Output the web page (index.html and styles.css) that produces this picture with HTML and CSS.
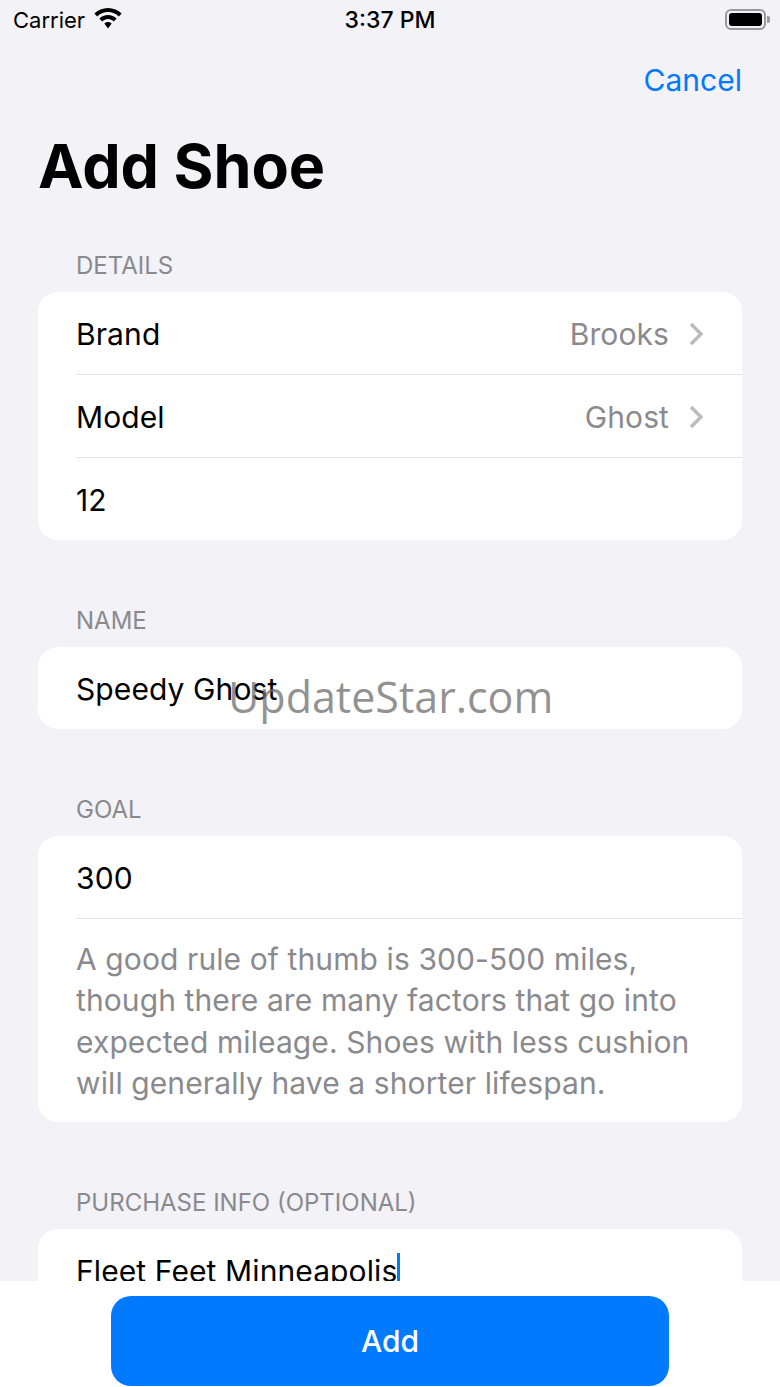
FILE: index.html
```html
<!DOCTYPE html>
<html lang="en">
<head>
    <meta charset="UTF-8">
    <meta name="viewport" content="width=device-width, initial-scale=1.0">
    <title>Add Shoe</title>
    <link rel="stylesheet" href="styles.css">
</head>
<body>
    <div class="screen">
        <div class="scroll">
            <div class="status-bar">
                <div class="status-left">
                    <span>Carrier</span>
                    <svg class="wifi" width="28" height="21" viewBox="0 0 28 21">
                        <path d="M14 0C8.6 0 3.9 2.1 0.4 5.6L3.2 8.6C6 5.8 9.8 4.1 14 4.1S22 5.8 24.8 8.6L27.6 5.6C24.1 2.1 19.4 0 14 0Z"/>
                        <path d="M14 7C10.6 7 7.6 8.4 5.4 10.6L8.2 13.6C9.7 12.1 11.7 11.1 14 11.1S18.3 12.1 19.8 13.6L22.6 10.6C20.4 8.4 17.4 7 14 7Z"/>
                        <path d="M14 14C12.5 14 11.2 14.6 10.3 15.6L14 20.5L17.7 15.6C16.8 14.6 15.5 14 14 14Z"/>
                    </svg>
                </div>
                <div class="status-time">3:37 PM</div>
                <div class="status-right">
                    <div class="battery"><div class="battery-fill"></div></div>
                    <div class="battery-cap"></div>
                </div>
            </div>

            <div class="nav"><span class="cancel">Cancel</span></div>
            <h1 class="title">Add Shoe</h1>

            <section class="group">
                <h2 class="group-label">DETAILS</h2>
                <div class="card">
                    <div class="row">
                        <span>Brand</span>
                        <span class="row-value">Brooks
                            <svg class="chevron" width="14" height="24" viewBox="0 0 14 24"><path d="M2 2L12 12L2 22"/></svg>
                        </span>
                    </div>
                    <div class="row">
                        <span>Model</span>
                        <span class="row-value">Ghost
                            <svg class="chevron" width="14" height="24" viewBox="0 0 14 24"><path d="M2 2L12 12L2 22"/></svg>
                        </span>
                    </div>
                    <div class="row">
                        <span>12</span>
                    </div>
                </div>
            </section>

            <section class="group">
                <h2 class="group-label">NAME</h2>
                <div class="card">
                    <div class="row"><span>Speedy Ghost</span></div>
                </div>
            </section>

            <section class="group">
                <h2 class="group-label">GOAL</h2>
                <div class="card">
                    <div class="row"><span>300</span></div>
                    <div class="row row-note">A good rule of thumb is 300-500 miles, though there are many factors that go into expected mileage. Shoes with less cushion will generally have a shorter lifespan.</div>
                </div>
            </section>

            <section class="group">
                <h2 class="group-label">PURCHASE INFO (OPTIONAL)</h2>
                <div class="card">
                    <div class="row"><span class="typed">Fleet Feet Minneapolis</span></div>
                </div>
            </section>
        </div>

        <div class="footer">
            <div class="add-button">Add</div>
        </div>

        <div class="watermark">UpdateStar.com</div>
    </div>
</body>
</html>
```

FILE: styles.css
```css
html, body {
    margin: 0;
    padding: 0;
}
body {
    font-family: Inter, "Liberation Sans", sans-serif;
    background-color: #f2f2f7;
    color: #000;
}
.screen {
    position: relative;
    width: 780px;
    height: 1387px;
    overflow: hidden;
    display: flex;
    flex-direction: column;
}
.scroll {
    height: 1281px;
    overflow: hidden;
    flex: none;
}
.status-bar {
    height: 40px;
    display: flex;
    align-items: center;
    justify-content: space-between;
    padding: 0 10px 0 13px;
    position: relative;
    font-size: 22px;
}
.status-left {
    display: flex;
    align-items: center;
    gap: 9px;
}
.wifi {
    margin-bottom: 4px;
}
.status-time {
    position: absolute;
    left: 0;
    right: 0;
    text-align: center;
    font-size: 23px;
    font-weight: 500;
}
.status-right {
    display: flex;
    align-items: center;
    gap: 1px;
    margin-bottom: 2px;
}
.battery {
    width: 41px;
    height: 21px;
    box-sizing: border-box;
    border: 2px solid #9a9a9e;
    border-radius: 6px;
    padding: 2px;
}
.battery-fill {
    height: 100%;
    background-color: #000;
    border-radius: 3px;
}
.battery-cap {
    width: 3px;
    height: 7px;
    background-color: #9a9a9e;
    border-radius: 0 2px 2px 0;
}
.nav {
    height: 78px;
    box-sizing: border-box;
    padding: 2px 38px 0 0;
    display: flex;
    justify-content: flex-end;
    align-items: center;
}
.cancel {
    color: #007aff;
    font-size: 30px;
}
.title {
    margin: 3px 0 40px 38px;
    font-size: 61px;
    line-height: 90px;
    font-weight: 700;
}
.group {
    margin: 0 38px 66px;
}
.group-label {
    margin: 0;
    padding: 1px 0 12px 38px;
    font-size: 24px;
    line-height: 28px;
    font-weight: 400;
    color: #8a8a8e;
}
.card {
    background-color: #fff;
    border-radius: 20px;
    padding-left: 38px;
}
.row {
    height: 83px;
    box-sizing: border-box;
    padding-top: 2px;
    display: flex;
    align-items: center;
    justify-content: space-between;
    font-size: 30px;
    letter-spacing: 0.1px;
    border-bottom: 1px solid #e3e3e6;
}
.row:last-child {
    height: 82px;
    border-bottom: none;
}
.row-value {
    display: flex;
    align-items: center;
    gap: 20px;
    color: #8a8a8e;
    padding-right: 39px;
}
.chevron {
    fill: none;
    stroke: #bcbcc0;
    stroke-width: 3.5;
}
.row.row-note {
    display: block;
    height: auto;
    padding: 20px 38px 18px 0;
    line-height: 41.3px;
    color: #8a8a8e;
}
.typed {
    border-right: 3px solid #007aff;
}
.footer {
    flex: 1;
    background-color: #fff;
    display: flex;
    justify-content: center;
    padding-top: 15px;
}
.add-button {
    width: 558px;
    height: 90px;
    background-color: #007aff;
    border-radius: 20px;
    color: #fff;
    font-size: 30px;
    font-weight: 500;
    display: flex;
    align-items: center;
    justify-content: center;
}
.watermark {
    position: absolute;
    left: 228px;
    top: 667px;
    font-family: "Open Sans", sans-serif;
    font-size: 43px;
    line-height: 60px;
    color: rgba(110, 110, 110, 0.75);
    white-space: nowrap;
}
```
